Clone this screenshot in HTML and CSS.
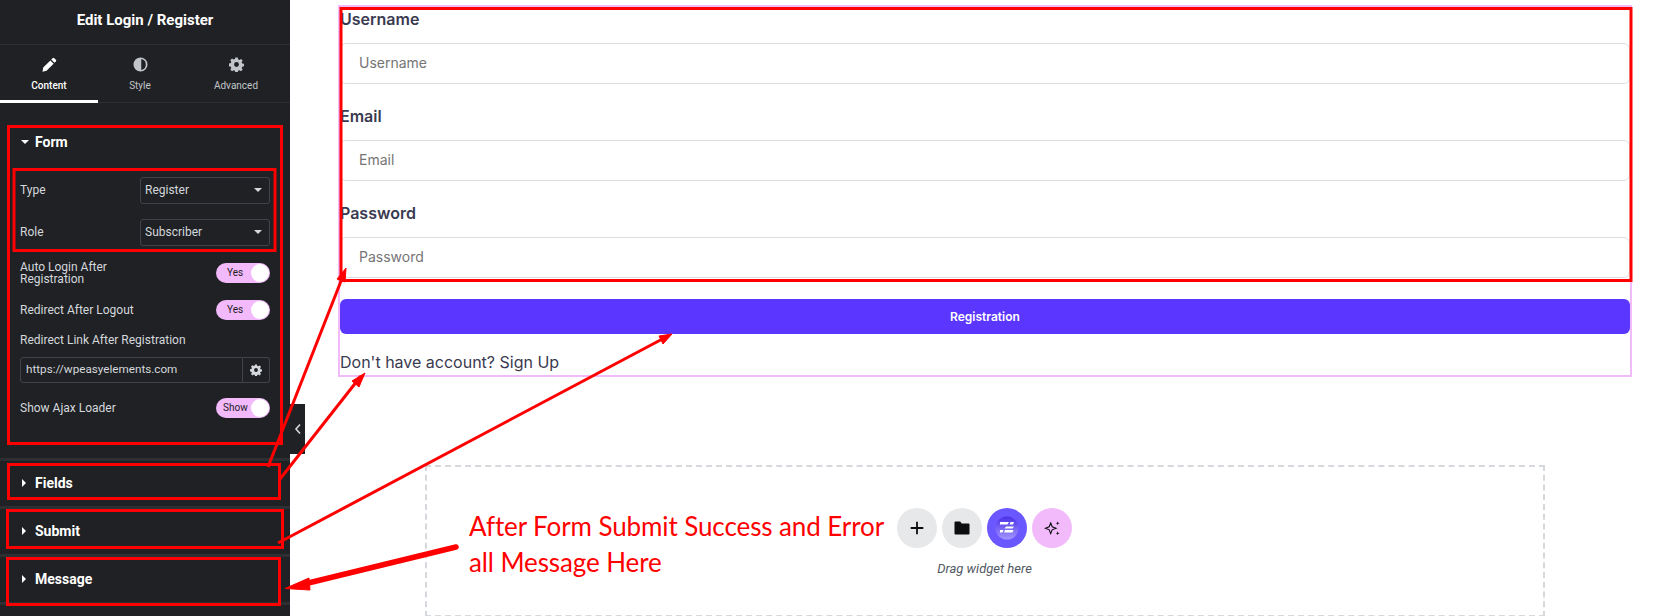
FILE: index.html
```html
<!DOCTYPE html>
<html lang="en">
<head>
<meta charset="UTF-8">
<meta name="viewport" content="width=device-width, initial-scale=1.0">
<title>Edit Login / Register</title>
<link rel="stylesheet" href="styles.css">
</head>
<body>

<div class="page">

    <aside class="sidebar">
        <div class="sidebar-title">Edit Login / Register</div>

        <div class="tabs">
            <div class="tab tab-active">
                <svg class="tab-icon" viewBox="0 0 16 16"><path fill="currentColor" d="M11.3 1.2a1.3 1.3 0 0 1 1.8 0l1.7 1.7a1.3 1.3 0 0 1 0 1.8l-1.5 1.5-3.5-3.5zM8.900 3.600l3.500 3.500-7.600 7.600-4.300.9.800-4.400z"/></svg>
                <span>Content</span>
            </div>
            <div class="tab">
                <svg class="tab-icon" viewBox="0 0 16 16"><path fill="currentColor" d="M8 .5a7.500 7.500 0 1 0 0 15 7.500 7.500 0 0 0 0-15zm.8 1.700a5.900 5.900 0 0 1 0 11.600z" fill-rule="evenodd"/></svg>
                <span>Style</span>
            </div>
            <div class="tab">
                <svg class="tab-icon" viewBox="0 0 16 16"><path fill="currentColor" fill-rule="evenodd" d="M6.700.5h2.600l.4 2 1.300.6 1.800-1.100 1.800 1.800-1.100 1.800.6 1.300 2 .4v2.600l-2 .4-.6 1.300 1.100 1.800-1.800 1.800-1.800-1.100-1.300.6-.4 2H6.700l-.4-2-1.300-.6-1.800 1.100-1.800-1.800 1.100-1.800-.6-1.300-2-.4V6.900l2-.4.6-1.300L1.400 3.400l1.800-1.800L5 2.700l1.300-.6zM8 5.400a2.600 2.600 0 1 0 0 5.200 2.600 2.600 0 0 0 0-5.200z"/></svg>
                <span>Advanced</span>
            </div>
        </div>

        <section class="panel panel-open">
            <div class="panel-head"><i class="caret-down"></i>Form</div>
            <div class="controls">
                <div class="control">
                    <label>Type</label>
                    <div class="select">Register<i class="caret-down caret-small"></i></div>
                </div>
                <div class="control">
                    <label>Role</label>
                    <div class="select">Subscriber<i class="caret-down caret-small"></i></div>
                </div>
                <div class="control control-tall">
                    <label>Auto Login After<br>Registration</label>
                    <div class="switch">Yes<b></b></div>
                </div>
                <div class="control control-short">
                    <label>Redirect After Logout</label>
                    <div class="switch">Yes<b></b></div>
                </div>
                <div class="link-group">
                    <label>Redirect Link After Registration</label>
                    <div class="link-input">
                        <span class="link-value">https://wpeasyelements.com</span>
                        <span class="link-btn">
                            <svg viewBox="0 0 16 16"><path fill="currentColor" fill-rule="evenodd" d="M6.700.5h2.600l.4 2 1.300.6 1.800-1.100 1.800 1.800-1.100 1.800.6 1.300 2 .4v2.600l-2 .4-.6 1.300 1.100 1.800-1.800 1.800-1.800-1.100-1.300.6-.4 2H6.700l-.4-2-1.300-.6-1.800 1.100-1.800-1.800 1.100-1.800-.6-1.300-2-.4V6.900l2-.4.6-1.300L1.400 3.400l1.800-1.800L5 2.700l1.300-.6zM8 5.400a2.600 2.600 0 1 0 0 5.200 2.600 2.600 0 0 0 0-5.200z"/></svg>
                        </span>
                    </div>
                </div>
                <div class="control control-short">
                    <label>Show Ajax Loader</label>
                    <div class="switch switch-show">Show<b></b></div>
                </div>
            </div>
        </section>

        <section class="panel"><div class="panel-head"><i class="caret-right"></i>Fields</div></section>
        <section class="panel"><div class="panel-head"><i class="caret-right"></i>Submit</div></section>
        <section class="panel"><div class="panel-head"><i class="caret-right"></i>Message</div></section>
        <section class="panel panel-last"></section>
    </aside>

    <div class="collapse-tab">
        <svg viewBox="0 0 8 12"><path d="M6 1.500 2 6l4 4.500" fill="none" stroke="currentColor" stroke-width="1.600"/></svg>
    </div>

    <main class="content">
        <form class="login-form">
            <label class="field-label">Username</label>
            <div class="field-input">Username</div>
            <label class="field-label">Email</label>
            <div class="field-input">Email</div>
            <label class="field-label">Password</label>
            <div class="field-input">Password</div>
            <div class="submit-btn">Registration</div>
            <p class="signup-line">Don't have account? Sign Up</p>
        </form>

        <div class="dropzone">
            <div class="note">After Form Submit Success and Error<br>all Message Here</div>
            <div class="drop-actions">
                <div class="drop-icons">
                    <span class="round round-grey">
                        <svg viewBox="0 0 16 16"><path d="M8 1.700v12.600M1.700 8h12.600" stroke="#0c0d0e" stroke-width="1.800" fill="none"/></svg>
                    </span>
                    <span class="round round-grey">
                        <svg viewBox="0 0 16 16"><path fill="#0c0d0e" d="M.5 2.500a1 1 0 0 1 1-1h4.700l1.500 2h6.800a1 1 0 0 1 1 1v9a1 1 0 0 1-1 1h-13a1 1 0 0 1-1-1z"/></svg>
                    </span>
                    <span class="round round-purple">
                        <svg class="logo" viewBox="0 0 24 24">
                            <defs>
                                <linearGradient id="logoFill" x1="0" y1="0" x2="0" y2="1">
                                    <stop offset="0" stop-color="#4a30e6"/>
                                    <stop offset="1" stop-color="#a395ff"/>
                                </linearGradient>
                            </defs>
                            <circle cx="12" cy="12" r="11.500" fill="url(#logoFill)"/>
                            <path fill="#fff" d="M5 6h9l-1.500 2.500H5zM15.500 6H19l-1 2.500h-3.500zM11 10.500h8l-1.500 2H9.500zM5 14h3.500l-1 2.500H5zM10 14h8.500l-1 2.500H9z"/>
                        </svg>
                    </span>
                    <span class="round round-pink">
                        <svg viewBox="0 0 16 16"><path d="M6.700 3 8.200 6.800 12 8.300 8.200 9.800 6.700 13.600 5.200 9.800 1.400 8.300 5.200 6.800z" fill="none" stroke="#0c0d0e" stroke-width="1.100"/><path d="M13.700 1.300l.5 1.500 1.500.5-1.500.5-.5 1.500-.5-1.500-1.500-.5 1.500-.5zM13.700 11.300l.5 1.500 1.500.5-1.500.5-.5 1.500-.5-1.500-1.500-.5 1.500-.5z" fill="#0c0d0e"/></svg>
                    </span>
                </div>
                <div class="drop-hint">Drag widget here</div>
            </div>
        </div>
    </main>

    <!-- red review marks drawn on top of the screenshot -->
    <svg class="marks" viewBox="0 0 1667 616">
        <g fill="none" stroke="#f00" stroke-width="3">
            <rect x="8.500" y="126.500" width="273" height="317"/>
            <rect x="14" y="169.500" width="261" height="81"/>
            <rect x="8.500" y="464.500" width="271" height="34"/>
            <rect x="7.500" y="510.500" width="275" height="37"/>
            <rect x="7.500" y="558.500" width="272" height="46"/>
            <rect x="341" y="8.500" width="1290" height="272"/>
        </g>
        <g stroke="#f00" fill="#f00">
            <path d="M268 467 343 276" stroke-width="3"/>
            <path d="M346 268 337 279 345 282z"/>
            <path d="M280 479 361 376" stroke-width="3"/>
            <path d="M365 373 352 381 359 387z"/>
            <path d="M278 543 668 336" stroke-width="3"/>
            <path d="M672 334 659 336 663 344z"/>
            <path d="M456 547 300 585" stroke-width="5.500" stroke-linecap="round"/>
            <path d="M285 588.500 309 578 310 590z"/>
        </g>
    </svg>

</div>

</body>
</html>
```

FILE: styles.css
```css
* {
    box-sizing: border-box;
}

html, body {
    margin: 0;
    height: 100%;
    background-color: #fff;
}

.page {
    position: relative;
    display: flex;
    width: 1667px;
    height: 616px;
    overflow: hidden;
    font-family: "Inter", "Liberation Sans", sans-serif;
}

/* editor panel */
.sidebar {
    width: 290px;
    height: 616px;
    flex-shrink: 0;
    background-color: #1f2124;
    color: #d5d8dc;
    font-family: "Roboto", "Liberation Sans", sans-serif;
    font-size: 12px;
}

.sidebar-title {
    height: 45px;
    padding-top: 12px;
    border-bottom: 1px solid #2d2f33;
    text-align: center;
    font-size: 15px;
    font-weight: 700;
    line-height: 17px;
    color: #fff;
}

.tabs {
    display: grid;
    grid-template-columns: 98px 84px 108px;
    height: 58px;
    border-bottom: 1px solid #2d2f33;
}

.tab {
    display: flex;
    flex-direction: column;
    align-items: center;
    padding-top: 12px;
    font-size: 10px;
    line-height: 14px;
    color: #c2c5ca;
}

.tab-active {
    height: 58px;
    border-bottom: 3px solid #fff;
    color: #fff;
    font-weight: 500;
}

.tab-icon {
    width: 15px;
    height: 15px;
    margin-bottom: 7px;
}

.panel {
    border-top: 3px solid #2d2f33;
    height: 48px;
}

.panel-open {
    border-top: 0;
    height: 355px;
    padding-top: 15px;
}

.panel-last {
    height: 14px;
}

.panel-head {
    display: flex;
    align-items: center;
    height: 43px;
    padding-left: 22px;
    font-size: 14px;
    font-weight: 700;
    color: #fff;
}

.panel-open .panel-head {
    height: 48px;
    padding-left: 21px;
}

.caret-down {
    width: 0;
    height: 0;
    margin-right: 6px;
    border-left: 4px solid transparent;
    border-right: 4px solid transparent;
    border-top: 4px solid #fff;
}

.caret-small {
    margin-right: 0;
    border-top-color: #d5d8dc;
}

.caret-right {
    width: 0;
    height: 0;
    margin-right: 9px;
    border-top: 4px solid transparent;
    border-bottom: 4px solid transparent;
    border-left: 4px solid #fff;
}

.controls {
    display: flex;
    flex-direction: column;
    gap: 15px;
    margin-top: 11px;
    padding: 0 20px;
}

.control {
    display: flex;
    justify-content: space-between;
    align-items: center;
    height: 27px;
}

.control label {
    margin-bottom: 1px;
}

.control-tall {
    height: 24px;
    line-height: 12px;
}

.control-short {
    height: 20px;
}

.select {
    display: flex;
    justify-content: space-between;
    align-items: center;
    width: 130px;
    height: 27px;
    padding: 0 7px 1px 4px;
    border: 1px solid #404349;
    border-radius: 3px;
}

.switch {
    position: relative;
    width: 54px;
    height: 20px;
    padding-left: 11px;
    border-radius: 10px;
    background-color: #f2b9fb;
    color: #1f2124;
    font-size: 10px;
    line-height: 19px;
}

.switch-show {
    padding-left: 7px;
}

.switch b {
    position: absolute;
    top: 1px;
    right: 1px;
    width: 18px;
    height: 18px;
    border-radius: 50%;
    background-color: #fff;
}

.link-group {
    margin-top: -1px;
}

.link-group label {
    display: block;
    height: 13px;
    margin-bottom: 10px;
    line-height: 13px;
}

.link-input {
    display: flex;
    height: 26px;
}

.link-value {
    flex: 1;
    padding-left: 5px;
    border: 1px solid #404349;
    border-radius: 3px 0 0 3px;
    font-size: 11.7px;
    line-height: 22px;
}

.link-btn {
    display: flex;
    justify-content: center;
    align-items: center;
    width: 27px;
    border: 1px solid #404349;
    border-left: 0;
    border-radius: 0 3px 3px 0;
}

.link-btn svg {
    width: 12px;
    height: 12px;
}

.collapse-tab {
    position: absolute;
    left: 290px;
    top: 404px;
    display: flex;
    justify-content: center;
    align-items: center;
    width: 15px;
    height: 50px;
    background-color: #1f2124;
    color: #d5d8dc;
}

.collapse-tab svg {
    width: 8px;
    height: 12px;
}

/* page preview */
.content {
    flex: 1;
    padding-top: 5px;
}

.login-form {
    width: 1294px;
    height: 372px;
    margin-left: 48px;
    border: 2px solid #f2b9fb;
    color: #3a3a50;
}

.field-label {
    display: block;
    height: 24px;
    margin-top: 20px;
    font-size: 16px;
    font-weight: 600;
    line-height: 24px;
}

.field-label:first-child {
    margin-top: 0;
}

.field-input {
    height: 41px;
    margin-top: 12px;
    padding-left: 18px;
    border: 1px solid #dedede;
    border-radius: 6px;
    font-size: 14px;
    line-height: 38px;
    color: #757575;
}

.submit-btn {
    height: 35px;
    margin-top: 21px;
    border-radius: 6px;
    background-color: #5a36ff;
    color: #fff;
    text-align: center;
    font-size: 12px;
    font-weight: 600;
    line-height: 35px;
}

.signup-line {
    margin: 16px 0 0;
    font-size: 16px;
    line-height: 24px;
}

.dropzone {
    display: flex;
    width: 1120px;
    height: 152px;
    margin: 88px 0 0 135px;
    padding: 41px 0 0 42px;
    border: 2px dashed #d5d8dc;
}

.note {
    width: 428px;
    flex-shrink: 0;
    font-family: "Lato", "Open Sans", sans-serif;
    font-size: 26px;
    letter-spacing: -0.1px;
    white-space: nowrap;
    line-height: 36px;
    color: #f00;
}

.drop-actions {
    width: 175px;
}

.drop-icons {
    display: flex;
    gap: 5px;
}

.round {
    display: flex;
    justify-content: center;
    align-items: center;
    width: 40px;
    height: 40px;
    border-radius: 50%;
}

.round svg {
    width: 16px;
    height: 16px;
}

.round .logo {
    width: 24px;
    height: 24px;
}

.round-grey {
    background-color: #e6e8ea;
}

.round-purple {
    background-color: #6b57ff;
}

.round-pink {
    background-color: #f2b9fb;
}

.drop-hint {
    margin-top: 13px;
    text-align: center;
    font-family: "Roboto", sans-serif;
    font-size: 13px;
    font-style: italic;
    line-height: 16px;
    color: #515962;
}

/* review marks */
.marks {
    position: absolute;
    left: 0;
    top: 0;
    width: 1667px;
    height: 616px;
    pointer-events: none;
}
```
